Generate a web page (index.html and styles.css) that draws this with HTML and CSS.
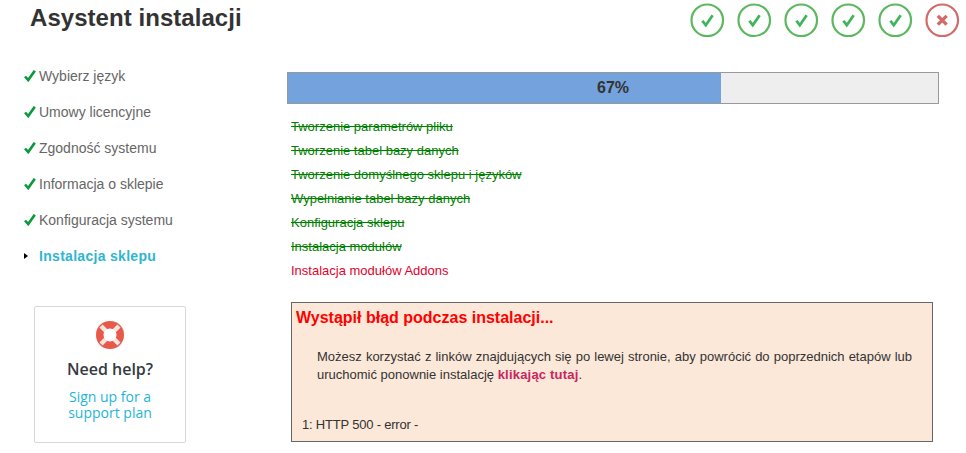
FILE: index.html
```html
<!DOCTYPE html>
<html lang="en">
<head>
    <meta charset="UTF-8">
    <meta name="viewport" content="width=device-width, initial-scale=1.0">
    <title>Asystent instalacji</title>
    <link rel="stylesheet" href="styles.css">
</head>
<body>
    <!-- Header -->
    <div class="header">
        <h1>Asystent instalacji</h1>
        <div class="status-icons">
            <svg class="status ok" viewBox="0 0 35 35"><circle cx="17.5" cy="17.5" r="16"/><path d="M12.5 18l3.5 4.5 7-10"/></svg>
            <svg class="status ok" viewBox="0 0 35 35"><circle cx="17.5" cy="17.5" r="16"/><path d="M12.5 18l3.5 4.5 7-10"/></svg>
            <svg class="status ok" viewBox="0 0 35 35"><circle cx="17.5" cy="17.5" r="16"/><path d="M12.5 18l3.5 4.5 7-10"/></svg>
            <svg class="status ok" viewBox="0 0 35 35"><circle cx="17.5" cy="17.5" r="16"/><path d="M12.5 18l3.5 4.5 7-10"/></svg>
            <svg class="status ok" viewBox="0 0 35 35"><circle cx="17.5" cy="17.5" r="16"/><path d="M12.5 18l3.5 4.5 7-10"/></svg>
            <svg class="status fail" viewBox="0 0 35 35"><circle cx="17.5" cy="17.5" r="16"/><path d="M13 13l9 9M22 13l-9 9"/></svg>
        </div>
    </div>

    <div class="main">
        <!-- Sidebar -->
        <div class="sidebar">
            <ul class="steps">
                <li class="done"><svg class="tick" viewBox="0 0 12 12"><path d="M1 6.5l3.2 3.6 6.6-9.4"/></svg>Wybierz język</li>
                <li class="done"><svg class="tick" viewBox="0 0 12 12"><path d="M1 6.5l3.2 3.6 6.6-9.4"/></svg>Umowy licencyjne</li>
                <li class="done"><svg class="tick" viewBox="0 0 12 12"><path d="M1 6.5l3.2 3.6 6.6-9.4"/></svg>Zgodność systemu</li>
                <li class="done"><svg class="tick" viewBox="0 0 12 12"><path d="M1 6.5l3.2 3.6 6.6-9.4"/></svg>Informacja o sklepie</li>
                <li class="done"><svg class="tick" viewBox="0 0 12 12"><path d="M1 6.5l3.2 3.6 6.6-9.4"/></svg>Konfiguracja systemu</li>
                <li class="current"><span class="arrow"></span>Instalacja sklepu</li>
            </ul>

            <div class="help-box">
                <svg class="help-icon" viewBox="0 0 28 28">
                    <rect x="0.5" y="0.5" width="27" height="27" rx="10" fill="#e8e6e4"/>
                    <circle cx="14" cy="14" r="10" fill="none" stroke="#e8594a" stroke-width="8"/>
                    <path d="M5 5l6 6M23 5l-6 6M5 23l6-6M23 23l-6-6" stroke="#f3e4de" stroke-width="4.5"/>
                    <circle cx="14" cy="14" r="6.5" fill="#fff"/>
                </svg>
                <div class="help-title">Need help?</div>
                <a class="help-link">Sign up for a<br>support plan</a>
            </div>
        </div>

        <!-- Content -->
        <div class="content">
            <div class="progress">
                <div class="progress-fill" style="width: 66.6%"></div>
                <span class="progress-label">67%</span>
            </div>

            <ul class="tasks">
                <li class="finished">Tworzenie parametrów pliku</li>
                <li class="finished">Tworzenie tabel bazy danych</li>
                <li class="finished">Tworzenie domyślnego sklepu i języków</li>
                <li class="finished">Wypełnianie tabel bazy danych</li>
                <li class="finished">Konfiguracja sklepu</li>
                <li class="finished">Instalacja modułów</li>
                <li class="failed">Instalacja modułów Addons</li>
            </ul>

            <div class="error-box">
                <h3>Wystąpił błąd podczas instalacji...</h3>
                <p class="error-text">Możesz korzystać z linków znajdujących się po lewej stronie, aby powrócić do poprzednich etapów lub uruchomić ponownie instalację <a class="retry">klikając tutaj</a>.</p>
                <p class="error-code">1: HTTP 500 - error -</p>
            </div>
        </div>
    </div>
</body>
</html>
```

FILE: styles.css
```css
/* General Styles */
body {
    margin: 0;
    font-family: "Liberation Sans", Arial, sans-serif;
    font-size: 12px;
    color: #353535;
    background-color: #fff;
    overflow: hidden;
}

ul {
    list-style: none;
    margin: 0;
    padding: 0;
}

/* Header */
.header {
    display: flex;
    justify-content: space-between;
    height: 72px;
    padding: 3px 6.5px 0 30px;
    box-sizing: border-box;
}

.header h1 {
    margin: 1px 0 0;
    font-size: 24px;
    line-height: 28px;
    font-weight: bold;
    letter-spacing: 0.05px;
    color: #333;
}

.status-icons {
    display: flex;
    gap: 12.5px;
    height: 35px;
}

.status {
    width: 34.5px;
    height: 34.5px;
    fill: none;
    stroke-width: 2.2;
}

.status.ok circle {
    stroke: #5cb85f;
}

.status.ok path {
    stroke: #3eb55a;
    stroke-width: 2.8;
}

.status.fail circle {
    stroke: #d26a6a;
}

.status.fail path {
    stroke: #d26a6a;
    stroke-width: 3.4;
}

.main {
    display: flex;
}

/* Sidebar */
.sidebar {
    width: 287px;
    flex-shrink: 0;
}

.steps {
    padding-left: 24px;
    font-size: 14px;
    color: #666;
}

.steps li {
    display: flex;
    align-items: center;
    height: 36px;
    margin-top: -14px;
    margin-bottom: 14px;
}

.tick {
    width: 12px;
    height: 12px;
    margin-right: 3px;
    fill: none;
    stroke: #0a9a3c;
    stroke-width: 2.6;
}

.steps .current {
    font-weight: bold;
    letter-spacing: 0.3px;
    color: #2fb5d2;
}

.arrow {
    width: 0;
    height: 0;
    margin-right: 11px;
    border-left: 4px solid #000;
    border-top: 3px solid transparent;
    border-bottom: 3px solid transparent;
}

.help-box {
    width: 152px;
    height: 137px;
    margin: 32px 0 0 34px;
    box-sizing: border-box;
    padding-top: 14px;
    border: 1px solid #d8d8d8;
    border-radius: 2px;
    text-align: center;
    font-family: "Open Sans", sans-serif;
}

.help-icon {
    display: block;
    width: 28px;
    height: 28px;
    margin: 0 auto;
}

.help-title {
    margin-top: 9px;
    font-size: 16px;
    line-height: 22px;
    font-weight: 600;
    color: #363a41;
}

.help-link {
    display: block;
    margin-top: 9px;
    font-size: 14px;
    line-height: 16px;
    color: #1fb5d8;
}

/* Content */
.content {
    width: 652px;
}

.progress {
    position: relative;
    height: 32px;
    box-sizing: border-box;
    border: 1px solid #999;
    background-color: #eee;
}

.progress-fill {
    height: 100%;
    background-color: #74a2dc;
}

.progress-label {
    position: absolute;
    top: 0;
    left: 0;
    right: 0;
    text-align: center;
    font-size: 16px;
    line-height: 30px;
    font-weight: bold;
    color: #333;
}

.tasks {
    margin: 11px 0 0 4px;
    font-size: 13px;
}

.tasks li {
    height: 24px;
    line-height: 24px;
}

.tasks .finished {
    color: #008000;
    text-decoration: line-through;
}

.tasks .failed {
    color: #e2002c;
}

/* Error Box */
.error-box {
    width: 642px;
    height: 140px;
    margin: 19px 0 0 4px;
    box-sizing: border-box;
    border: 1px solid #666;
    background-color: #fbe8d8;
    font-size: 13px;
    color: #333;
}

.error-box h3 {
    margin: 5px 0 0 4px;
    font-size: 16px;
    line-height: 20px;
    color: #f00;
}

.error-text {
    margin: 20px 20px 0 25px;
    line-height: 18px;
    text-align: justify;
}

.retry {
    font-weight: bold;
    letter-spacing: 0.2px;
    color: #c9245f;
}

.error-code {
    margin: 32px 0 0 10px;
    line-height: 18px;
    letter-spacing: -0.2px;
}
```
